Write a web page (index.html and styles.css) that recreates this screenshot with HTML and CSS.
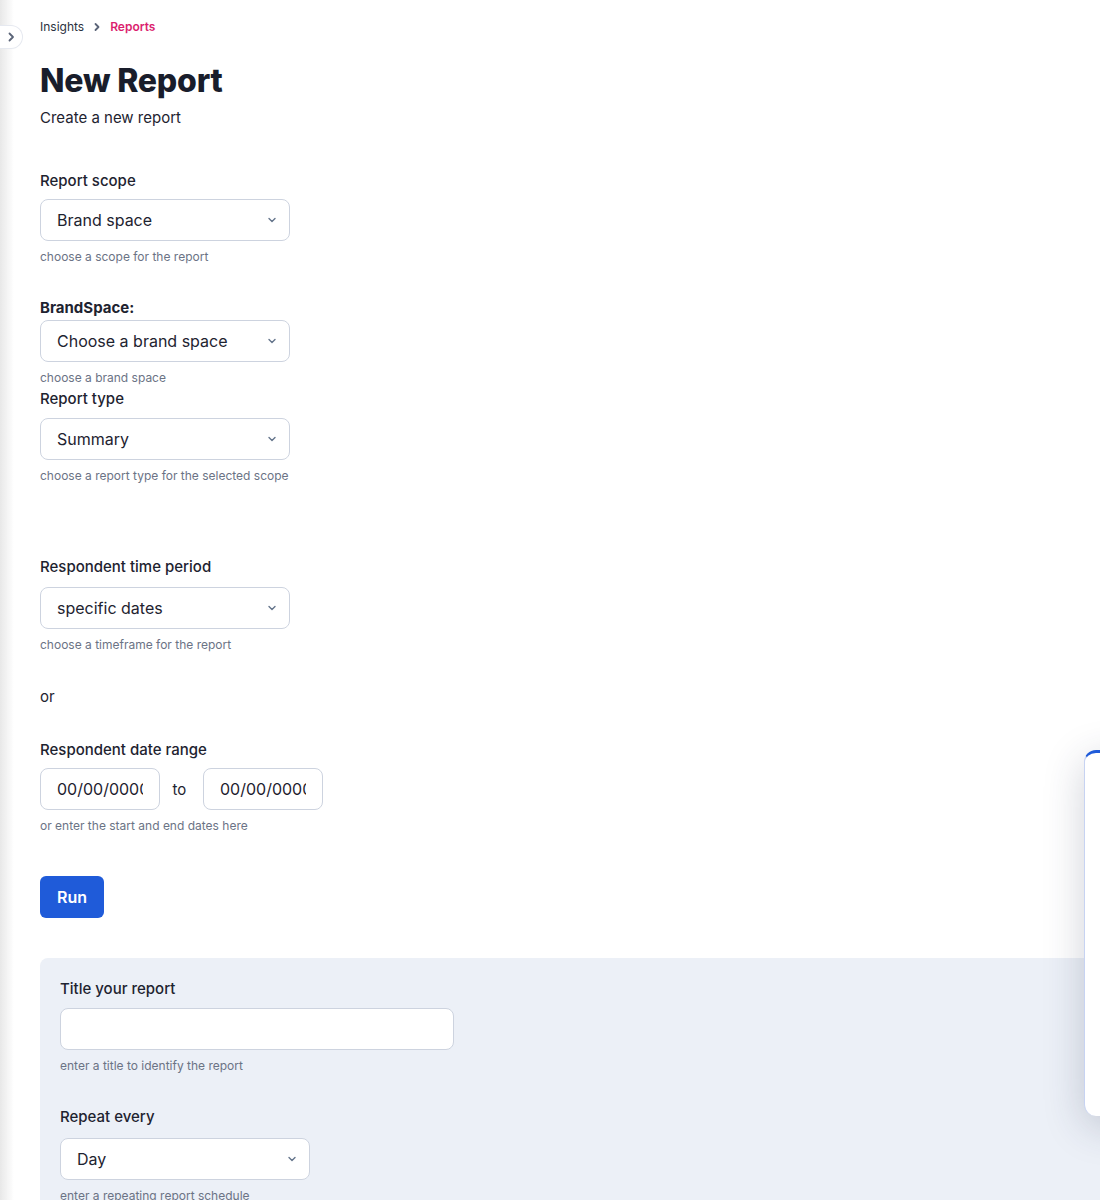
FILE: index.html
```html
<!DOCTYPE html>
<html lang="en">
<head>
    <meta charset="UTF-8">
    <meta name="viewport" content="width=device-width, initial-scale=1.0">
    <title>New Report</title>
    <link rel="stylesheet" href="styles.css">
</head>
<body>
    <div class="sidebar-edge"></div>
    <button class="sidebar-toggle" type="button" aria-label="Open sidebar">
        <svg width="12" height="12" viewBox="0 0 12 12"><path d="M4.5 2.5 8 6l-3.5 3.5" fill="none" stroke="#5b6478" stroke-width="1.8" stroke-linecap="round" stroke-linejoin="round"/></svg>
    </button>

    <main class="page">
        <nav class="breadcrumb">
            <span>Insights</span>
            <svg width="10" height="10" viewBox="0 0 10 10"><path d="M3.5 2 6.5 5l-3 3" fill="none" stroke="#5b6478" stroke-width="1.8" stroke-linecap="round" stroke-linejoin="round"/></svg>
            <span class="current">Reports</span>
        </nav>

        <h1>New Report</h1>
        <p class="subtitle">Create a new report</p>

        <form class="report-form">
            <div class="field field-scope">
                <label for="scope">Report scope</label>
                <div class="select-wrap">
                    <select id="scope">
                        <option>Brand space</option>
                        <option>Organisation</option>
                    </select>
                    <svg class="chev" width="12" height="12" viewBox="0 0 12 12"><path d="M3 4.5 6 7.5l3-3" fill="none" stroke="#64748b" stroke-width="1.4" stroke-linecap="round" stroke-linejoin="round"/></svg>
                </div>
                <p class="help">choose a scope for the report</p>
            </div>

            <div class="field field-brand">
                <label for="brandspace" class="strong">BrandSpace:</label>
                <div class="select-wrap">
                    <select id="brandspace">
                        <option>Choose a brand space</option>
                    </select>
                    <svg class="chev" width="12" height="12" viewBox="0 0 12 12"><path d="M3 4.5 6 7.5l3-3" fill="none" stroke="#64748b" stroke-width="1.4" stroke-linecap="round" stroke-linejoin="round"/></svg>
                </div>
                <p class="help">choose a brand space</p>
            </div>

            <div class="field field-type">
                <label for="type">Report type</label>
                <div class="select-wrap">
                    <select id="type">
                        <option>Summary</option>
                        <option>Detailed</option>
                    </select>
                    <svg class="chev" width="12" height="12" viewBox="0 0 12 12"><path d="M3 4.5 6 7.5l3-3" fill="none" stroke="#64748b" stroke-width="1.4" stroke-linecap="round" stroke-linejoin="round"/></svg>
                </div>
                <p class="help">choose a report type for the selected scope</p>
            </div>

            <div class="field field-period">
                <label for="period">Respondent time period</label>
                <div class="select-wrap">
                    <select id="period">
                        <option>specific dates</option>
                        <option>last 7 days</option>
                    </select>
                    <svg class="chev" width="12" height="12" viewBox="0 0 12 12"><path d="M3 4.5 6 7.5l3-3" fill="none" stroke="#64748b" stroke-width="1.4" stroke-linecap="round" stroke-linejoin="round"/></svg>
                </div>
                <p class="help">choose a timeframe for the report</p>
            </div>

            <p class="or">or</p>

            <div class="field field-range">
                <label for="start">Respondent date range</label>
                <div class="date-row">
                    <input type="text" id="start" value="00/00/0000">
                    <span>to</span>
                    <input type="text" id="end" value="00/00/0000">
                </div>
                <p class="help">or enter the start and end dates here</p>
            </div>

            <button type="button" class="run">Run</button>

            <section class="schedule">
                <div class="field field-title">
                    <label for="title">Title your report</label>
                    <input type="text" id="title" class="title-input">
                    <p class="help">enter a title to identify the report</p>
                </div>

                <div class="field field-repeat">
                    <label for="repeat">Repeat every</label>
                    <div class="select-wrap">
                        <select id="repeat">
                            <option>Day</option>
                            <option>Week</option>
                            <option>Month</option>
                        </select>
                        <svg class="chev" width="12" height="12" viewBox="0 0 12 12"><path d="M3 4.5 6 7.5l3-3" fill="none" stroke="#64748b" stroke-width="1.4" stroke-linecap="round" stroke-linejoin="round"/></svg>
                    </div>
                    <p class="help">enter a repeating report schedule</p>
                </div>
            </section>
        </form>
    </main>

    <aside class="side-panel"></aside>
</body>
</html>
```

FILE: styles.css
```css
html, body {
    margin: 0;
    padding: 0;
    background: #ffffff;
    overflow-x: hidden;
}
body {
    font-family: Inter, "Noto Sans", sans-serif;
    color: #1e2330;
}
.sidebar-edge {
    position: fixed;
    left: 0;
    top: 0;
    bottom: 0;
    width: 14px;
    background: linear-gradient(to right, #e8e8e8, rgba(255,255,255,0));
}
.sidebar-toggle {
    position: absolute;
    left: -1px;
    top: 25px;
    width: 24px;
    height: 24px;
    padding: 0;
    border: 1px solid #e6e9f0;
    border-left: none;
    border-radius: 0 12px 12px 0;
    background: #ffffff;
    display: flex;
    align-items: center;
    justify-content: center;
    cursor: pointer;
}
.page {
    padding: 19px 0 0 40px;
}
.breadcrumb {
    display: flex;
    align-items: center;
    gap: 8px;
    font-size: 12px;
    line-height: 16px;
    color: #2b3140;
}
.breadcrumb .current {
    color: #db1f6f;
    font-weight: 600;
}
h1 {
    margin: 26px 0 0;
    font-size: 32px;
    line-height: 40px;
    font-weight: 800;
    color: #191d2b;
    letter-spacing: -0.2px;
}
.subtitle {
    margin: 6px 0 0;
    font-size: 15px;
    line-height: 22px;
}
.report-form {
    margin-top: 41px;
}
.field label {
    display: block;
    font-size: 15px;
    line-height: 22px;
    font-weight: 500;
    color: #1e2330;
    margin-bottom: 7px;
}
.field label.strong {
    font-weight: 700;
    margin-bottom: 1px;
}
.select-wrap {
    position: relative;
    width: 250px;
}
.select-wrap select {
    appearance: none;
    -webkit-appearance: none;
    width: 100%;
    height: 42px;
    padding: 0 32px 0 16px;
    border: 1px solid #cdd3df;
    border-radius: 8px;
    background: #ffffff;
    font-family: inherit;
    font-size: 16px;
    color: #1e2330;
}
.select-wrap .chev {
    position: absolute;
    right: 12px;
    top: 15px;
    pointer-events: none;
}
.help {
    margin: 8px 0 0;
    font-size: 12px;
    line-height: 16px;
    color: #6b7385;
}
.field-scope {
    margin-bottom: 32px;
}
.field-brand {
    margin-bottom: 2px;
}
.field-type label {
    margin-bottom: 8px;
}
.field-type {
    margin-bottom: 72px;
}
.field-period label {
    margin-bottom: 9px;
}
.or {
    margin: 34px 0 0;
    font-size: 15px;
    line-height: 20px;
}
.field-range {
    margin-top: 32px;
}
.date-row {
    display: flex;
    align-items: center;
}
.date-row input {
    width: 120px;
    height: 42px;
    box-sizing: border-box;
    padding: 0 16px;
    border: 1px solid #cdd3df;
    border-radius: 8px;
    font-family: inherit;
    font-size: 16px;
    color: #1e2330;
}
.date-row span {
    box-sizing: border-box;
    width: 43px;
    padding-right: 4px;
    font-size: 15px;
    text-align: center;
}
.run {
    display: block;
    margin-top: 42px;
    height: 42px;
    padding: 0 17px;
    border: none;
    border-radius: 6px;
    background: #1f5bd9;
    color: #ffffff;
    font-family: inherit;
    font-size: 16px;
    font-weight: 600;
    cursor: pointer;
}
.schedule {
    margin-top: 40px;
    background: #ecf0f7;
    border-radius: 8px 0 0 8px;
    padding: 20px 20px 40px;
}
.field-title label {
    margin-bottom: 8px;
}
.title-input {
    display: block;
    width: 394px;
    height: 42px;
    box-sizing: border-box;
    border: 1px solid #cdd3df;
    border-radius: 8px;
    background: #ffffff;
    font-family: inherit;
    font-size: 16px;
}
.field-repeat {
    margin-top: 32px;
}
.field-repeat label {
    margin-bottom: 10px;
}
.side-panel {
    position: absolute;
    left: 1084px;
    top: 750px;
    width: 320px;
    height: 366px;
    box-sizing: border-box;
    background: #ffffff;
    border-top: 3px solid #1f5bd9;
    border-left: 1px solid #c7d3f2;
    border-radius: 12px;
    box-shadow: 0 10px 40px rgba(40, 50, 80, 0.22);
}
```
